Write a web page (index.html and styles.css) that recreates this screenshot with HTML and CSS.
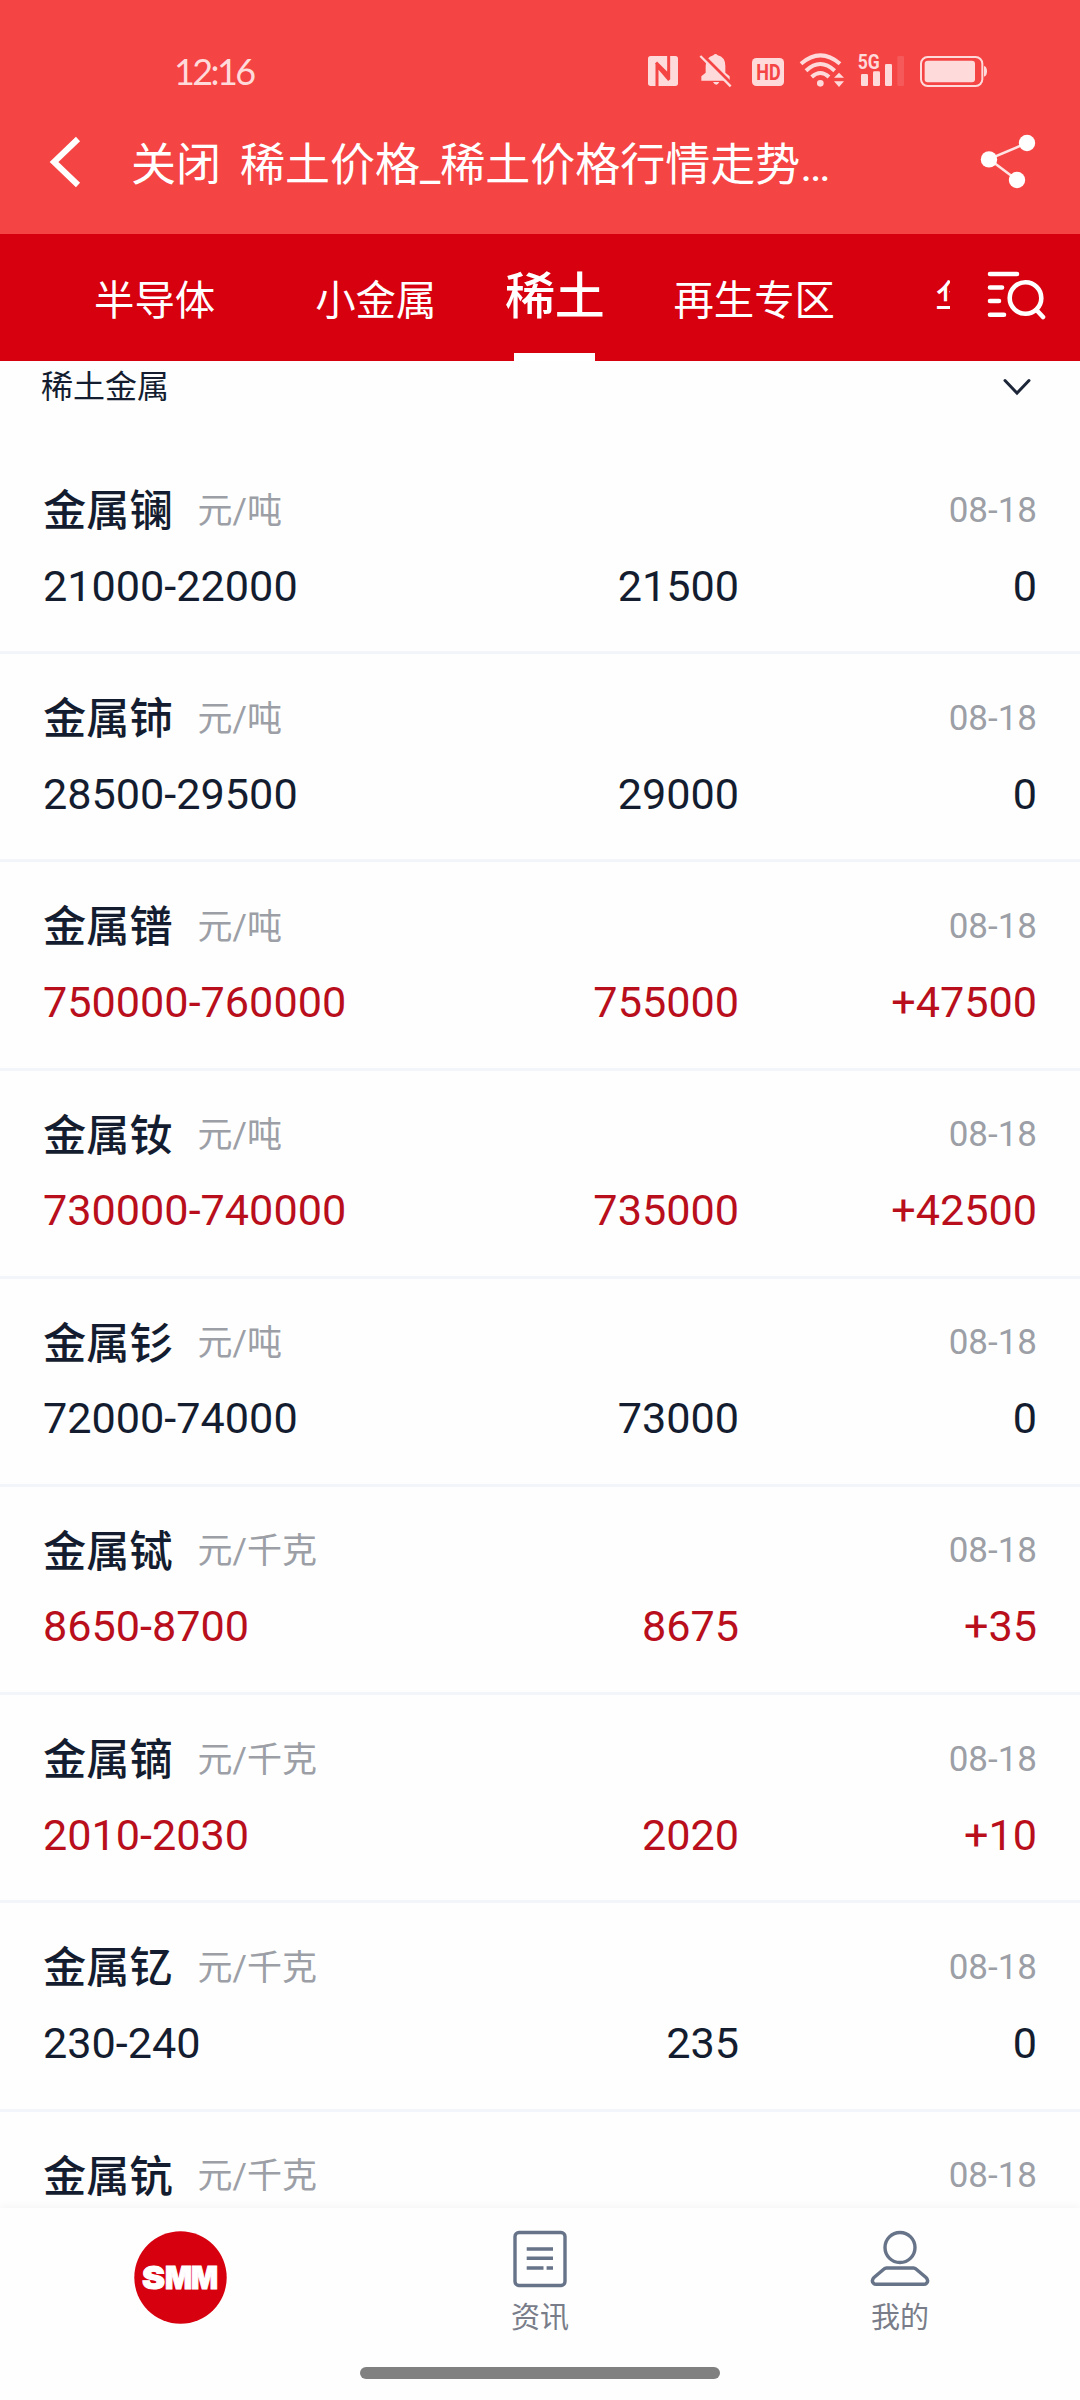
FILE: index.html
```html
<!DOCTYPE html>
<html lang="zh-CN">
  <head>
    <meta charset="UTF-8" />
    <meta name="viewport" content="width=device-width, initial-scale=1.0" />
    <title>稀土价格_稀土价格行情走势</title>
    <link rel="stylesheet" href="styles.css">
  </head>
  <body>
    <header class="header">
      <div class="status">
        <span class="time">12:16</span>
        <svg class="status-icons" viewBox="60 60 1050 120">
          <!-- nfc -->
          <rect x="84" y="78" width="90" height="90" rx="8" />
          <path class="cut" d="M111 168V98M146 78V146M108 98l36 36M114 110l34 40" />
          <!-- muted bell -->
          <path d="M280 76q7-8 13 0q23 5 23 32v20l13 11v13H244v-13l13-11v-20q0-26 23-32zM279 156h19q-9 17-19 0z" />
          <path class="slash-cut" d="M247 74l90 90" />
          <path class="slash" d="M241 78l91 91" />
          <!-- hd -->
          <rect x="396" y="84" width="96" height="84" rx="13" />
          <text class="hd" x="409" y="150" textLength="73" lengthAdjust="spacingAndGlyphs">HD</text>
          <!-- wifi -->
          <path class="arc" d="M543 101q58-50 117 0M558 122q43-40 86 0M575 141q26-24 52 0" />
          <circle cx="601" cy="160" r="10" />
          <path d="M642 143l15-15 15 15zM642 154l15 17 15-17z" />
          <!-- signal -->
          <text class="net" x="713" y="118" textLength="66" lengthAdjust="spacingAndGlyphs">5G</text>
          <rect x="723" y="132" width="21" height="36" rx="4" />
          <rect x="759" y="124" width="21" height="44" rx="4" />
          <rect x="795" y="102" width="21" height="66" rx="4" />
          <rect x="832" y="78" width="20" height="90" rx="4" opacity=".15" />
          <!-- battery -->
          <rect class="cell" x="903" y="81" width="184" height="87" rx="20" />
          <rect x="914" y="92" width="151" height="65" rx="9" />
          <path d="M1092 108q9 2 9 16t-9 16z" />
        </svg>
      </div>
      <div class="title-bar">
        <svg class="back" viewBox="0 0 32 54"><path d="M29 4L5 27L29 50" /></svg>
        <span class="close">关闭</span>
        <h1 class="title">稀土价格_稀土价格行情走势…</h1>
        <svg class="share" viewBox="0 0 56 56">
          <path d="M47 9L9 25L37 46" />
          <circle cx="47" cy="9" r="8.2" />
          <circle cx="9" cy="25.4" r="8.2" />
          <circle cx="37" cy="46" r="8.2" />
        </svg>
      </div>
    </header>

    <nav class="tabs">
      <div class="tab-list">
        <span class="tab">半导体</span>
        <span class="tab">小金属</span>
        <span class="tab active">稀土</span>
        <span class="tab">再生专区</span>
        <span class="tab">华</span>
      </div>
      <svg class="search" viewBox="0 0 60 52">
        <path d="M4 4H31M4 17.5H16M4 31H13M4 44.7H18" />
        <circle cx="39.5" cy="28" r="15.8" />
        <path d="M50.5 40L57 47" />
      </svg>
    </nav>

    <main class="content">
      <div class="group">
        <span class="group-name">稀土金属</span>
        <svg class="chevron" viewBox="0 0 28 18"><path d="M2 2.5L14 15L26 2.5" /></svg>
      </div>

      <div class="row">
        <div class="line top"><b class="name">金属镧</b><span class="unit">元/吨</span><span class="date">08-18</span></div>
        <div class="line"><span class="range">21000-22000</span><span class="avg">21500</span><span class="change">0</span></div>
      </div>
      <div class="row">
        <div class="line top"><b class="name">金属铈</b><span class="unit">元/吨</span><span class="date">08-18</span></div>
        <div class="line"><span class="range">28500-29500</span><span class="avg">29000</span><span class="change">0</span></div>
      </div>
      <div class="row up">
        <div class="line top"><b class="name">金属镨</b><span class="unit">元/吨</span><span class="date">08-18</span></div>
        <div class="line"><span class="range">750000-760000</span><span class="avg">755000</span><span class="change">+47500</span></div>
      </div>
      <div class="row up">
        <div class="line top"><b class="name">金属钕</b><span class="unit">元/吨</span><span class="date">08-18</span></div>
        <div class="line"><span class="range">730000-740000</span><span class="avg">735000</span><span class="change">+42500</span></div>
      </div>
      <div class="row">
        <div class="line top"><b class="name">金属钐</b><span class="unit">元/吨</span><span class="date">08-18</span></div>
        <div class="line"><span class="range">72000-74000</span><span class="avg">73000</span><span class="change">0</span></div>
      </div>
      <div class="row up">
        <div class="line top"><b class="name">金属铽</b><span class="unit">元/千克</span><span class="date">08-18</span></div>
        <div class="line"><span class="range">8650-8700</span><span class="avg">8675</span><span class="change">+35</span></div>
      </div>
      <div class="row up">
        <div class="line top"><b class="name">金属镝</b><span class="unit">元/千克</span><span class="date">08-18</span></div>
        <div class="line"><span class="range">2010-2030</span><span class="avg">2020</span><span class="change">+10</span></div>
      </div>
      <div class="row">
        <div class="line top"><b class="name">金属钇</b><span class="unit">元/千克</span><span class="date">08-18</span></div>
        <div class="line"><span class="range">230-240</span><span class="avg">235</span><span class="change">0</span></div>
      </div>
      <div class="row">
        <div class="line top"><b class="name">金属钪</b><span class="unit">元/千克</span><span class="date">08-18</span></div>
      </div>
    </main>

    <footer class="footer">
      <div class="menu">
        <div class="menu-item">
          <svg class="logo" viewBox="0 0 93 93">
            <circle cx="46.5" cy="46.5" r="46.2" />
            <text y="58"><tspan x="8" textLength="23" lengthAdjust="spacingAndGlyphs">S</tspan><tspan x="31" textLength="27" lengthAdjust="spacingAndGlyphs">M</tspan><tspan x="57" textLength="27" lengthAdjust="spacingAndGlyphs">M</tspan></text>
          </svg>
        </div>
        <div class="menu-item">
          <svg class="menu-icon" viewBox="0 0 60 58">
            <rect x="5" y="2.5" width="50" height="53" rx="4" />
            <path d="M16.7 19H43M16.7 28.3H43M16.7 38H33.5M36.6 38H43" />
          </svg>
          <span>资讯</span>
        </div>
        <div class="menu-item">
          <svg class="menu-icon" viewBox="0 0 60 58">
            <circle cx="30" cy="17.5" r="15" />
            <path d="M16.5 38H43.5Q45 38 46 39L56 47.5Q59 50.5 56.5 53.3Q55.5 54.3 54 54.3H6Q4.5 54.3 3.5 53.3Q1 50.5 4 47.5L14 39Q15 38 16.5 38Z" />
          </svg>
          <span>我的</span>
        </div>
      </div>
      <div class="home-bar"></div>
    </footer>
  </body>
</html>
```
FILE: styles.css
```css
* {
  box-sizing: border-box;
}
body {
  margin: 0;
  width: 1080px;
  height: 2400px;
  display: flex;
  flex-direction: column;
  overflow: hidden;
  background-color: #fefefe;
  color: #141d30;
  font-family: Roboto, "Noto Sans CJK SC", sans-serif;
}
svg {
  display: block;
  flex-shrink: 0;
}
.header {
  height: 234px;
  flex-shrink: 0;
  background-color: #f54444;
  color: white;
}
.status {
  height: 90px;
  padding: 50px 90px 0 174px;
  display: flex;
  justify-content: space-between;
}
.time {
  font-family: Lato, sans-serif;
  font-size: 36px;
  line-height: 43px;
  letter-spacing: -2.6px;
  color: #ffdada;
}
.status-icons {
  width: 350px;
  height: 40px;
  fill: #ffdada;
}
.cut {
  fill: none;
  stroke: #f54444;
  stroke-width: 9;
}
.slash-cut {
  stroke: #f54444;
  stroke-width: 9;
}
.slash {
  stroke: #ffdada;
  stroke-width: 7;
}
.hd {
  fill: #f54444;
  font-size: 66px;
  font-weight: bold;
}
.net {
  font-size: 62px;
  font-weight: bold;
}
.arc {
  fill: none;
  stroke: #ffdada;
  stroke-width: 12;
}
.cell {
  fill: none;
  stroke: #ffdada;
  stroke-width: 6;
}
.title-bar {
  height: 144px;
  padding: 0 44px 0 49px;
  display: flex;
  align-items: center;
}
.back {
  width: 32px;
  height: 54px;
  fill: none;
  stroke: white;
  stroke-width: 6;
}
.close {
  margin-left: 50px;
  padding-top: 7px;
  font-size: 45px;
  line-height: 60px;
}
.title {
  margin: 0 0 0 19px;
  padding-top: 7px;
  font-size: 45px;
  font-weight: normal;
  line-height: 60px;
}
.share {
  width: 56px;
  height: 56px;
  margin-left: auto;
  fill: white;
}
.share path {
  fill: none;
  stroke: #ffe4e4;
  stroke-width: 2.5;
}
.tabs {
  height: 127px;
  flex-shrink: 0;
  display: flex;
  background-color: #d7000f;
  color: white;
}
.tab-list {
  width: 950px;
  padding-left: 94px;
  display: flex;
  overflow: hidden;
  white-space: nowrap;
}
.tab {
  flex-shrink: 0;
  margin-right: 100px;
  font-size: 40.4px;
  line-height: 135px;
}
.tab:nth-child(2) {
  margin-right: 78px;
}
.active {
  width: 81px;
  height: 127px;
  margin-right: 78px;
  display: flex;
  justify-content: center;
  border-bottom: 8px solid white;
  font-size: 50px;
  font-weight: 500;
  line-height: 127px;
}
.search {
  width: 60px;
  height: 52px;
  margin: 36px 0 0 36px;
  fill: none;
  stroke: white;
  stroke-width: 4.6;
  stroke-linecap: round;
}
.content {
  flex: 1;
  min-height: 0;
  overflow: hidden;
}
.group {
  height: 85px;
  padding: 0 49px 34px 41px;
  display: flex;
  align-items: center;
  justify-content: space-between;
  font-size: 32px;
}
.group-name {
  padding-bottom: 6px;
}
.chevron {
  width: 28px;
  height: 18px;
  fill: none;
  stroke: #1c2638;
  stroke-width: 3;
  stroke-linecap: round;
}
.row {
  height: 208.2px;
  padding: 34px 43px 0;
  border-bottom: 3px solid #f2f5f9;
}
.line {
  display: flex;
  align-items: center;
  height: 92px;
  font-size: 43.2px;
}
.top {
  height: 60px;
}
.up .line:last-child {
  color: #b90e1b;
}
.name {
  padding-bottom: 6px;
  font-weight: 500;
}
.unit {
  margin-left: 25px;
  padding-bottom: 6px;
}
.unit,
.date {
  color: #9c9fa6;
  font-size: 35px;
}
.date {
  margin-left: auto;
}
.range {
  width: 360px;
}
.avg {
  width: 336px;
  text-align: right;
}
.change {
  flex: 1;
  text-align: right;
}
.footer {
  height: 192px;
  flex-shrink: 0;
  background-color: #fefefe;
  box-shadow: 0 -2px 8px rgba(0, 0, 0, 0.04);
}
.menu {
  height: 159px;
  display: flex;
}
.menu-item {
  width: 360px;
  padding-top: 22px;
  display: flex;
  flex-direction: column;
  align-items: center;
  color: #787d89;
  font-size: 29px;
  line-height: 60px;
}
.logo {
  width: 93px;
  height: 93px;
  margin-top: 1px;
  fill: #d7000f;
}
.logo text {
  fill: white;
  stroke: white;
  stroke-width: 1;
  font-family: Inter, sans-serif;
  font-size: 32px;
  font-weight: 900;
}
.menu-icon {
  width: 60px;
  height: 58px;
  fill: none;
  stroke: #667388;
  stroke-width: 3.4;
}
.home-bar {
  width: 360px;
  height: 12px;
  margin: 0 auto;
  border-radius: 6px;
  background-color: #808080;
}
```
